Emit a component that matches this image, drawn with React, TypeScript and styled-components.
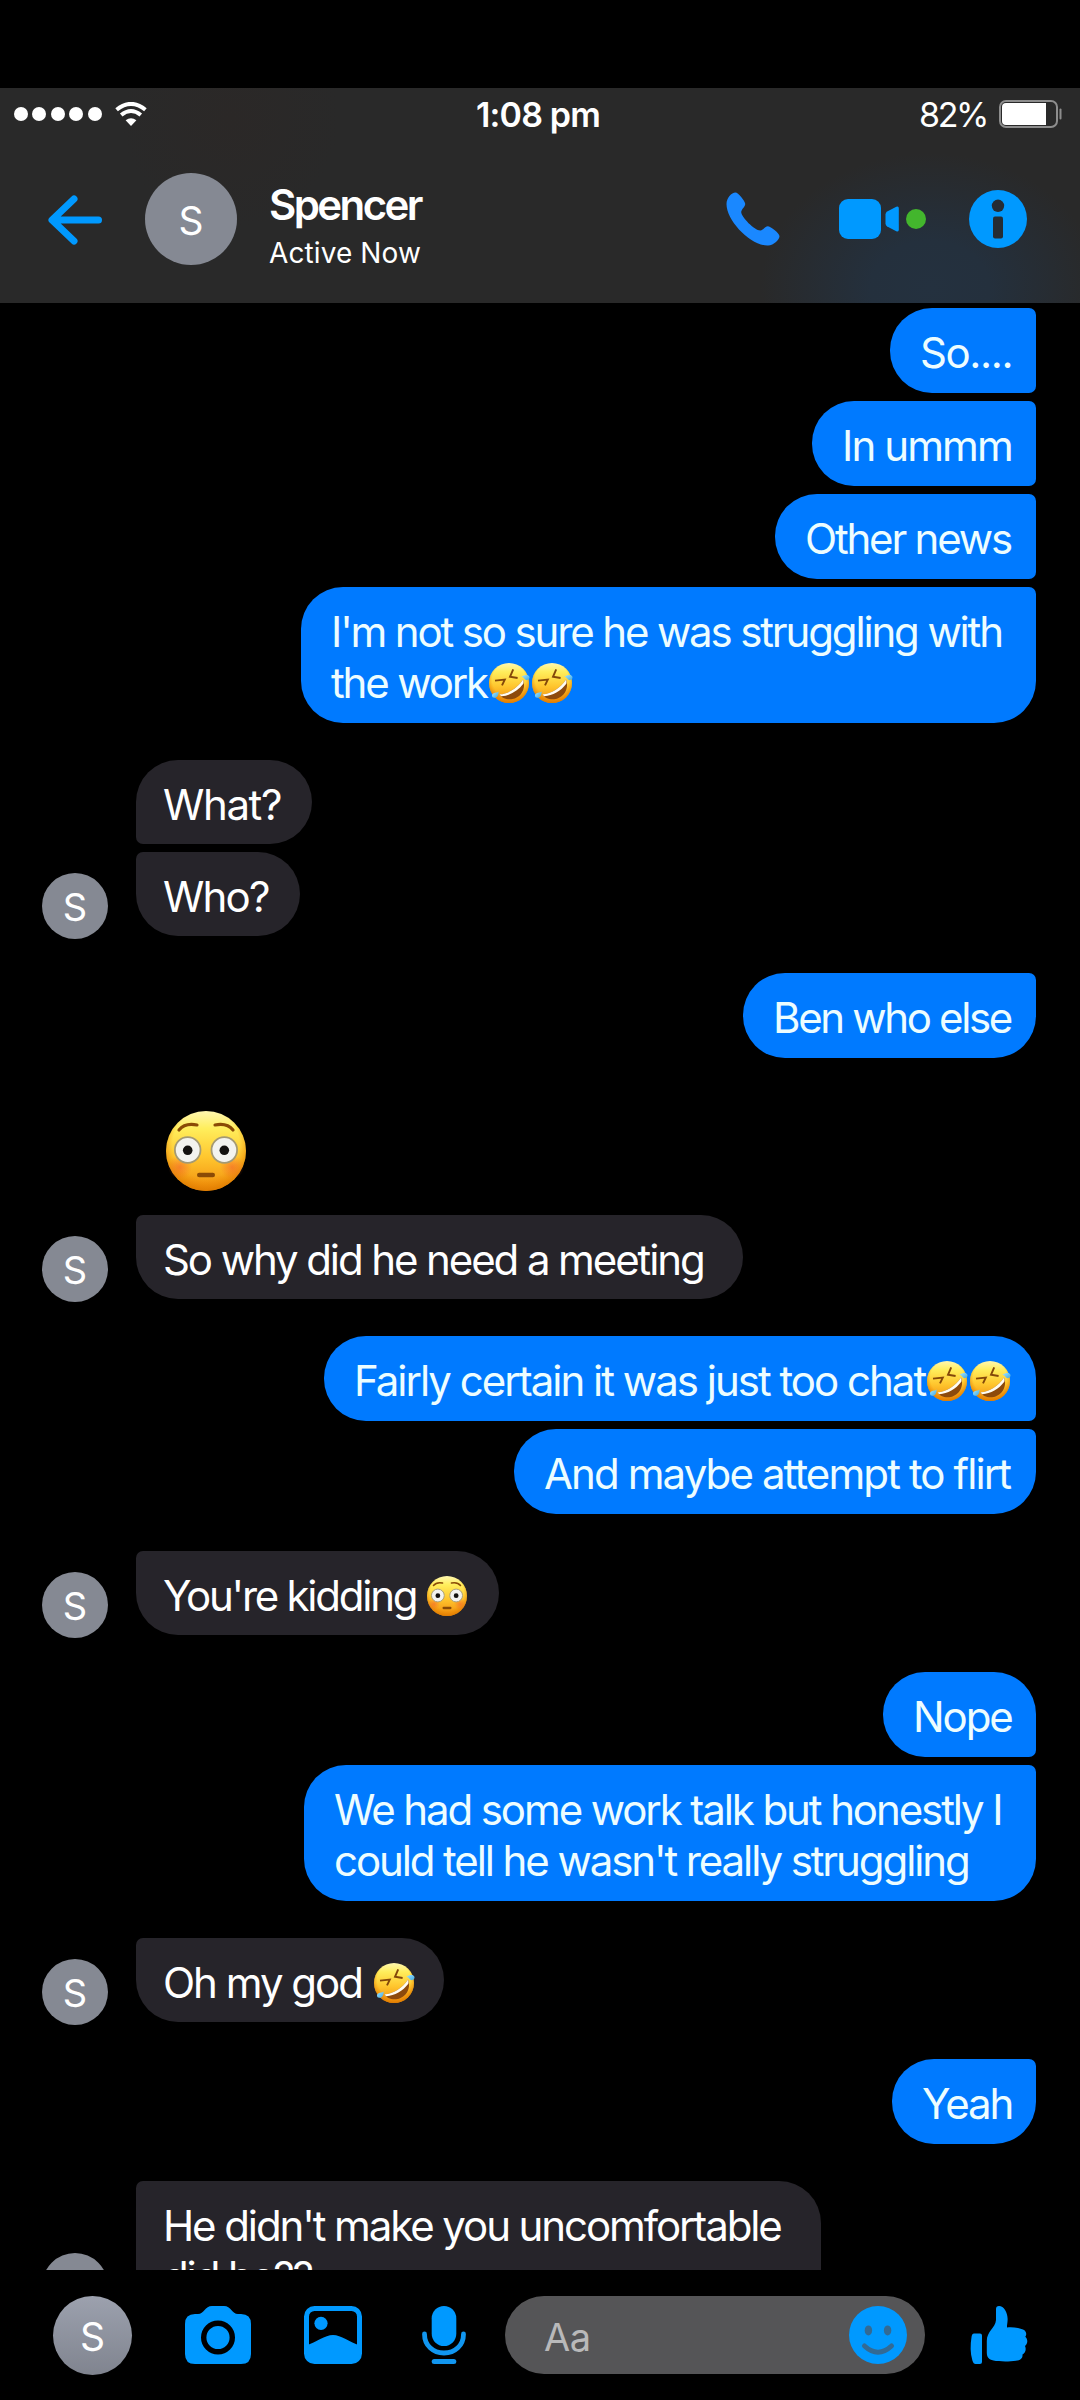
import React from "react";
import styled, { createGlobalStyle } from "styled-components";

const BLUE = "#0099ff";

const Global = createGlobalStyle`
  * { box-sizing: border-box; }
  body { margin: 0; background: #000; }
`;

const Screen = styled.div`
  width: 1080px;
  height: 2400px;
  display: flex;
  flex-direction: column;
  padding-top: 88px;
  overflow: hidden;
  background: #000;
  color: #fff;
  font-family: Inter, "Liberation Sans", sans-serif;
`;

const Top = styled.header`
  flex: none;
  height: 215px;
  background:
    radial-gradient(170px 135px at 930px 200px, #24313f 0%, #24303d 35%, rgba(36, 48, 61, 0) 100%),
    radial-gradient(110px 110px at 230px 30px, #2b2827 0%, rgba(43, 40, 39, 0) 100%),
    #292929;
`;

const StatusBar = styled.div`
  height: 50px;
  display: grid;
  grid-template-columns: 1fr auto 1fr;
  align-items: center;
  padding: 0 18px 0 14px;
`;

const Signal = styled.div`
  display: flex;
  align-items: center;
  gap: 4.4px;
`;

const Dot = styled.span`
  width: 14px;
  height: 14px;
  border-radius: 50%;
  background: #fff;
`;

const WifiIcon = styled.svg`
  margin-left: 9px;
`;

const Clock = styled.span`
  font-size: 34px;
  line-height: 50px;
  padding-top: 2px;
  font-weight: 600;
  letter-spacing: -0.8px;
`;

const Power = styled.div`
  display: flex;
  align-items: center;
  justify-content: flex-end;
  gap: 12px;
`;

const Percent = styled.span`
  font-size: 34px;
  line-height: 50px;
  padding-top: 2px;
  letter-spacing: -2.4px;
`;

const ContactBar = styled.div`
  height: 165px;
  display: flex;
  align-items: center;
  padding: 0 53px 3px 47px;
`;

const Avatar = styled.div<{ $size: number; $font: number; $shade?: boolean }>`
  flex: none;
  width: ${(p) => p.$size}px;
  height: ${(p) => p.$size}px;
  border-radius: 50%;
  display: flex;
  align-items: center;
  justify-content: center;
  padding-top: 2px;
  font-size: ${(p) => p.$font}px;
  line-height: 1;
  background: ${(p) => (p.$shade ? "linear-gradient(#9ca1ae, #80848f)" : "#858993")};
`;

const BackIcon = styled.svg`
  margin: 2px 42px 0 0;
`;

const Contact = styled.div`
  flex: 1;
  margin-left: 32px;
  padding-top: 13px;
`;

const Name = styled.div`
  font-size: 42px;
  line-height: 50px;
  font-weight: 600;
  letter-spacing: -2.6px;
`;

const Presence = styled.div`
  margin-top: 4px;
  font-size: 28px;
  line-height: 38px;
  letter-spacing: 0.1px;
`;

const Calls = styled.div`
  display: flex;
  align-items: center;
`;

const VideoGroup = styled.div`
  display: flex;
  align-items: center;
  gap: 7px;
  margin: 0 43px 0 59px;
`;

const Online = styled.span`
  width: 20px;
  height: 20px;
  border-radius: 50%;
  background: #43b62d;
`;

const Thread = styled.main`
  flex: none;
  height: 1967px;
  padding: 5px 44px 0 42px;
  overflow: hidden;
  display: flex;
  flex-direction: column;
  gap: 37px;
`;

const Group = styled.section<{ $mine?: boolean }>`
  flex: none;
  display: flex;
  align-items: flex-end;
  justify-content: ${(p) => (p.$mine ? "flex-end" : "flex-start")};
  gap: 28px;

  > ${Avatar} {
    margin-bottom: -3px;
  }
`;

const Stack = styled.div<{ $mine?: boolean }>`
  display: flex;
  flex-direction: column;
  align-items: ${(p) => (p.$mine ? "flex-end" : "flex-start")};
  gap: 8px;
`;

const Bubble = styled.div<{ $mine?: boolean; $width: number; $corners: string; $track?: number }>`
  width: ${(p) => p.$width}px;
  padding: ${(p) => (p.$mine ? "19px 0 15px 30px" : "19px 0 14px 27px")};
  border-radius: ${(p) => p.$corners};
  background: ${(p) => (p.$mine ? "#007aff" : "#26242a")};
  color: ${(p) => (p.$mine ? "#edfdff" : "#fff")};
  font-size: 42px;
  line-height: 51px;
  letter-spacing: ${(p) => p.$track ?? -2.1}px;
  white-space: pre;
`;

const BigEmoji = styled.div`
  height: 112px;
  padding: 16px 0 0 30px;
`;

const InlineEmoji = styled.svg`
  width: 43px;
  height: 40px;
  vertical-align: -5px;
`;

const Composer = styled.footer`
  flex: none;
  height: 130px;
  display: flex;
  align-items: center;
  padding-left: 53px;
`;

const Tools = styled.div`
  display: flex;
  align-items: center;
  margin: 0 39px 0 53px;
`;

const ToolIcon = styled.svg<{ $gap?: number }>`
  margin-right: ${(p) => p.$gap ?? 0}px;
`;

const Field = styled.div`
  flex: none;
  width: 420px;
  height: 78px;
  border-radius: 39px;
  background: #555557;
  display: flex;
  align-items: center;
  justify-content: space-between;
  padding: 0 18px 0 39px;
  margin-right: 45px;
`;

const Placeholder = styled.span`
  color: #b9b9ba;
  font-size: 38px;
  line-height: 50px;
  padding-top: 3px;
  letter-spacing: -0.5px;
`;

const SENT = {
  flat: "42px 7px 7px 42px",
  first: "42px 42px 7px 42px",
  last: "42px 7px 42px 42px",
};
const GOT = {
  first: "42px 42px 42px 7px",
  last: "7px 42px 42px 42px",
};

const HiddenDefs = styled.svg`
  position: absolute;
`;

const Gradients = () => (
  <HiddenDefs width="0" height="0" aria-hidden="true">
    <defs>
      <linearGradient id="face" x1="0" y1="0" x2="0" y2="1">
        <stop offset="0" stopColor="#fff7b0" />
        <stop offset="0.22" stopColor="#ffee5c" />
        <stop offset="0.58" stopColor="#ffc62e" />
        <stop offset="1" stopColor="#f08c0c" />
      </linearGradient>
      <radialGradient id="rim" cx="0.5" cy="0.42" r="0.58">
        <stop offset="0.72" stopColor="#ee8a00" stopOpacity="0" />
        <stop offset="1" stopColor="#dd7a00" stopOpacity="0.85" />
      </radialGradient>
      <radialGradient id="blush">
        <stop offset="0" stopColor="#f4622a" stopOpacity="0.6" />
        <stop offset="1" stopColor="#f4622a" stopOpacity="0" />
      </radialGradient>
      <linearGradient id="tear" x1="0" y1="0" x2="1" y2="1">
        <stop offset="0" stopColor="#a5e6ff" />
        <stop offset="1" stopColor="#3fa9e4" />
      </linearGradient>
    </defs>
  </HiddenDefs>
);

const FlushedShapes = () => (
  <>
    <circle cx="40" cy="40" r="40" fill="url(#face)" />
    <circle cx="40" cy="40" r="40" fill="url(#rim)" />
    <circle cx="14" cy="56" r="12" fill="url(#blush)" />
    <circle cx="66" cy="56" r="12" fill="url(#blush)" />
    <path d="M13 19 Q19 11.5 31 14" stroke="#8a4b06" strokeWidth="3.2" fill="none" strokeLinecap="round" />
    <path d="M67 19 Q61 11.5 49 14" stroke="#8a4b06" strokeWidth="3.2" fill="none" strokeLinecap="round" />
    <circle cx="21.7" cy="39" r="12.8" fill="#f3f3ef" stroke="#a49a74" strokeWidth="1.8" />
    <circle cx="58.3" cy="39" r="12.8" fill="#f3f3ef" stroke="#a49a74" strokeWidth="1.8" />
    <circle cx="21.7" cy="39.3" r="4.8" fill="#141210" />
    <circle cx="58.3" cy="39.3" r="4.8" fill="#141210" />
    <rect x="31" y="61.7" width="18" height="4.6" rx="2.2" fill="#8a4b06" />
  </>
);

const Flushed = () => (
  <InlineEmoji viewBox="-2 0 86 80" role="img" aria-label="flushed face">
    <FlushedShapes />
  </InlineEmoji>
);

const Rofl = () => (
  <InlineEmoji viewBox="-2 0 43 40" role="img" aria-label="rolling on the floor laughing">
    <circle cx="20" cy="20" r="20" fill="url(#face)" />
    <circle cx="20" cy="20" r="20" fill="url(#rim)" />
    <path d="M6 17.6 L15.8 16.6 L13 22.4" stroke="#84480a" strokeWidth="1.9" fill="none" />
    <path d="M24.2 6.4 L21 13.8 L28.6 15" stroke="#84480a" strokeWidth="1.9" fill="none" />
    <path d="M10.5 31.2 C18 31.5 29 25 34 16.5 C37.5 25 32 34.5 23.5 36 C17.5 37 12.6 34.8 10.5 31.2 Z" fill="#8d4a0c" />
    <path d="M10.5 31.2 C18 31.5 29 25 34 16.5 C34.6 18 34.7 19.6 34.3 20.8 C29 28 20.5 32.8 12.4 33.3 C11.7 32.8 11 32 10.5 31.2 Z" fill="#fffdf4" />
    <path d="M9.6 28.4 C9.7 32.6 7.6 35 5.2 34.8 C2.5 34.5 2.3 31.2 4.6 30.2 C6.4 29.4 8.3 29.5 9.6 28.4 Z" fill="url(#tear)" />
    <path d="M32.4 13.6 C36 11.2 39.6 11.4 40.4 13.8 C41.1 16.3 38.4 18 36.4 16.7 C34.9 15.7 34.1 14 32.4 13.6 Z" fill="url(#tear)" />
  </InlineEmoji>
);

const SmallAvatar = () => <Avatar $size={66} $font={38}>S</Avatar>;

export default function App() {
  return (
    <Screen>
      <Global />
      <Gradients />
      <Top>
        <StatusBar>
          <Signal>
            <Dot />
            <Dot />
            <Dot />
            <Dot />
            <Dot />
            <WifiIcon width="32" height="25" viewBox="0 0 32 25">
              <path d="M1.6 7.8 Q16 -4 30.4 7.8" stroke="#fff" strokeWidth="4" fill="none" />
              <path d="M6.2 13 Q16 5 25.8 13" stroke="#fff" strokeWidth="4" fill="none" />
              <path d="M10.6 18.3 Q16 14.2 21.4 18.3 L16 24 Z" fill="#fff" />
            </WifiIcon>
          </Signal>
          <Clock>1:08 pm</Clock>
          <Power>
            <Percent>82%</Percent>
            <svg width="63" height="28" viewBox="0 0 63 28">
              <rect x="1" y="1" width="57" height="26" rx="6" fill="none" stroke="#8d8d8d" strokeWidth="2" />
              <rect x="3" y="3" width="44" height="22" rx="4" fill="#fff" />
              <rect x="43" y="3" width="4" height="22" fill="#fff" />
              <rect x="60.5" y="8.5" width="2" height="11" rx="1" fill="#8d8d8d" />
            </svg>
          </Power>
        </StatusBar>
        <ContactBar>
          <BackIcon width="56" height="50" viewBox="0 0 56 50">
            <path d="M27 4 L5 25 L27 46 M6 25 H51.5" fill="none" stroke={BLUE} strokeWidth="7" strokeLinecap="round" strokeLinejoin="round" />
          </BackIcon>
          <Avatar $size={92} $font={39}>S</Avatar>
          <Contact>
            <Name>Spencer</Name>
            <Presence>Active Now</Presence>
          </Contact>
          <Calls>
            <svg width="54" height="54" viewBox="0 0 54 54">
              <path
                d="M9.5 0.5 C12 0.5 19 9 19.2 11.8 C19.4 14.5 15.6 17 15.2 20 C15 25 29 39 34.5 38.6 C37 38.3 39 34.3 41.5 34.3 C45 34.3 53.5 41.5 53.5 44.3 C53.5 47.5 48 53.4 42 53.5 C25 54 0.5 29 0.5 12 C0.5 6 5.5 0.5 9.5 0.5 Z"
                fill="#1a88ff"
              />
            </svg>
            <VideoGroup>
              <svg width="60" height="40" viewBox="0 0 60 40">
                <rect width="42" height="40" rx="9" fill={BLUE} />
                <path d="M46.5 15.5 Q46.5 13.6 48.2 12.6 L57.3 7.8 Q59.8 6.7 59.8 9.5 V30.5 Q59.8 33.3 57.3 32.2 L48.2 27.4 Q46.5 26.4 46.5 24.5 Z" fill={BLUE} />
              </svg>
              <Online />
            </VideoGroup>
            <svg width="58" height="58" viewBox="0 0 58 58">
              <circle cx="29" cy="29" r="29" fill={BLUE} />
              <circle cx="29" cy="15.8" r="6.2" fill="#252c34" />
              <rect x="24" y="26.5" width="10" height="22" rx="2" fill="#252c34" />
            </svg>
          </Calls>
        </ContactBar>
      </Top>

      <Thread>
        <Group $mine>
          <Stack $mine>
            <Bubble $mine $width={146} $corners={SENT.flat} $track={-1.4}>So....</Bubble>
            <Bubble $mine $width={224} $corners={SENT.flat} $track={-1.9}>In ummm</Bubble>
            <Bubble $mine $width={261} $corners={SENT.flat} $track={-2.2}>Other news</Bubble>
            <Bubble $mine $width={735} $corners={SENT.last} $track={-2.15}>
              {"I'm not so sure he was struggling with\nthe work"}
              <Rofl />
              <Rofl />
            </Bubble>
          </Stack>
        </Group>

        <Group>
          <SmallAvatar />
          <Stack>
            <Bubble $width={176} $corners={GOT.first} $track={-1.4}>What?</Bubble>
            <Bubble $width={164} $corners={GOT.last} $track={-1.8}>Who?</Bubble>
          </Stack>
        </Group>

        <Group $mine>
          <Bubble $mine $width={293} $corners={SENT.last} $track={-2.35}>Ben who else</Bubble>
        </Group>

        <Group>
          <SmallAvatar />
          <Stack>
            <BigEmoji>
              <svg width="80" height="80" viewBox="0 0 80 80" role="img" aria-label="flushed face">
                <FlushedShapes />
              </svg>
            </BigEmoji>
            <Bubble $width={607} $corners={GOT.last}>So why did he need a meeting</Bubble>
          </Stack>
        </Group>

        <Group $mine>
          <Stack $mine>
            <Bubble $mine $width={712} $corners={SENT.first} $track={-2}>
              Fairly certain it was just too chat
              <Rofl />
              <Rofl />
            </Bubble>
            <Bubble $mine $width={522} $corners={SENT.last} $track={-1.9}>And maybe attempt to flirt</Bubble>
          </Stack>
        </Group>

        <Group>
          <SmallAvatar />
          <Bubble $width={363} $corners={GOT.last} $track={-2.25}>
            {"You're kidding "}
            <Flushed />
          </Bubble>
        </Group>

        <Group $mine>
          <Stack $mine>
            <Bubble $mine $width={153} $corners={SENT.first}>Nope</Bubble>
            <Bubble $mine $width={732} $corners={SENT.last}>
              {"We had some work talk but honestly I\ncould tell he wasn't really struggling"}
            </Bubble>
          </Stack>
        </Group>

        <Group>
          <SmallAvatar />
          <Bubble $width={308} $corners={GOT.last} $track={-2}>
            {"Oh my god "}
            <Rofl />
          </Bubble>
        </Group>

        <Group $mine>
          <Bubble $mine $width={144} $corners={SENT.last}>Yeah</Bubble>
        </Group>

        <Group>
          <SmallAvatar />
          <Bubble $width={685} $corners={GOT.last}>{"He didn't make you uncomfortable\ndid he??"}</Bubble>
        </Group>
      </Thread>

      <Composer>
        <Avatar $size={79} $font={39} $shade>S</Avatar>
        <Tools>
          <ToolIcon $gap={53} width="66" height="58" viewBox="0 0 66 58">
            <path
              d="M10 8 H13 C19 8 20 0 27 0 H39 C46 0 47 8 53 8 H56 Q66 8 66 18 V48 Q66 58 56 58 H10 Q0 58 0 48 V18 Q0 8 10 8 Z"
              fill={BLUE}
            />
            <circle cx="33" cy="31.5" r="14.3" fill={BLUE} stroke="#000" strokeWidth="5.4" />
          </ToolIcon>
          <ToolIcon $gap={60} width="58" height="58" viewBox="0 0 58 58">
            <rect x="2.5" y="2.5" width="53" height="53" rx="8" fill="none" stroke={BLUE} strokeWidth="5" />
            <path d="M2.5 39.5 C12 36 21 29 29 29 C37 29 46 36 55.5 39.5 V48 Q55.5 55.5 48 55.5 H10 Q2.5 55.5 2.5 48 Z" fill={BLUE} />
            <circle cx="17" cy="17.3" r="6.6" fill={BLUE} />
          </ToolIcon>
          <ToolIcon width="44" height="58" viewBox="0 0 44 58">
            <rect x="9.7" y="0" width="24.6" height="40" rx="12.3" fill={BLUE} />
            <path d="M2.5 28 C2.5 39.5 11 47 22 47 C33 47 41.5 39.5 41.5 28" fill="none" stroke="#1196f0" strokeWidth="4.8" strokeLinecap="round" />
            <rect x="9.7" y="53" width="24.6" height="5" rx="2.5" fill="#1196f0" />
          </ToolIcon>
        </Tools>
        <Field>
          <Placeholder>Aa</Placeholder>
          <svg width="58" height="58" viewBox="0 0 58 58">
            <circle cx="29" cy="29" r="29" fill={BLUE} />
            <ellipse cx="19.4" cy="24.4" rx="3.7" ry="5" fill="#336a94" />
            <ellipse cx="38.6" cy="24.4" rx="3.7" ry="5" fill="#336a94" />
            <path d="M15.5 40 Q29 52.5 42.5 40" fill="none" stroke="#336a94" strokeWidth="5" strokeLinecap="round" />
          </svg>
        </Field>
        <svg width="58" height="58" viewBox="0 0 58 58">
          <path d="M4 27.4 H10 Q12 27.4 12 29.5 V56 Q12 58 10 58 H5.5 Q3.5 58 2.4 54.5 C0.2 47 0.2 39 1.6 30.5 Q2.1 27.4 4 27.4 Z" fill={BLUE} />
          <path
            d="M26 3 C26 1 27 0 29 0 C34 0 38 7 37.6 14 C37.5 17 36.8 19.5 37 21.5 C43 21 49 21.8 53 23.5 C56.5 25 57 28.5 55.3 30.7 C58 33 58 37.5 55 40 C56.5 43 55.5 47 52.5 48.5 C52.8 52.5 50.5 54 46 54.7 C39 55.8 29 55.6 23.5 54.5 C18.5 53.5 16.8 51 16.8 46.5 V35 C16.8 25 25.5 22 26 14 Z"
            fill={BLUE}
          />
        </svg>
      </Composer>
    </Screen>
  );
}
